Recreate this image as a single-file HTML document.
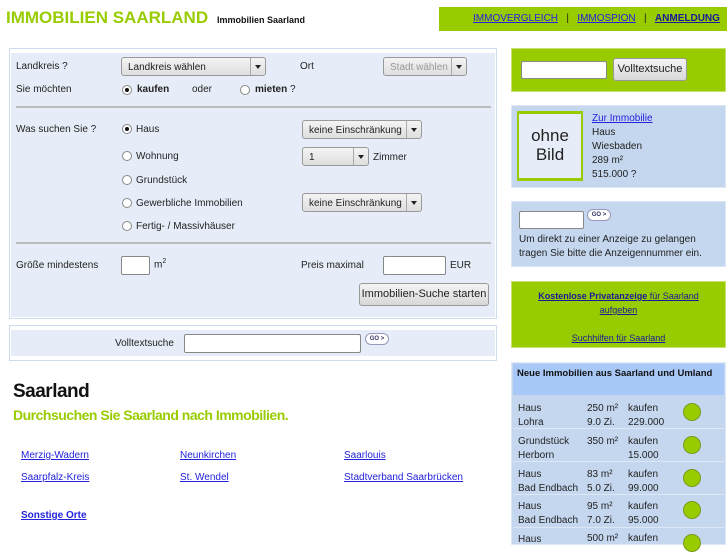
<!DOCTYPE html>
<html><head><meta charset="utf-8"><style>
*{margin:0;padding:0;box-sizing:border-box}
body{width:727px;height:545px;overflow:hidden;background:#fff;font-family:"Liberation Sans","DejaVu Sans",sans-serif;font-size:10px;color:#222;position:relative}
.a{position:absolute;white-space:nowrap}
a{color:#2222dd;text-decoration:underline}
.sel{position:absolute;height:19px;border:1px solid #999;border-radius:3px;background:linear-gradient(#f4f4f4,#dedede);font-size:10px;padding:4px 6px;color:#222}
.sel:after{content:"";position:absolute;right:0;top:0;bottom:0;width:14px;border-left:1px solid #aaa}
.sel i{position:absolute;right:4px;top:7px;border:3px solid transparent;border-top:4px solid #222;z-index:1}
.inp{position:absolute;background:#fff;border:1px solid #888;border-radius:2px}
.rad{position:absolute;width:10px;height:10px;border:1px solid #888;border-radius:50%;background:#fff}
.rad.on:after{content:"";position:absolute;left:2px;top:2px;width:4px;height:4px;border-radius:50%;background:#111}
.btn{position:absolute;border:1px solid #999;border-radius:3px;background:linear-gradient(#f4f4f4,#d8d8d8);font-size:11px;text-align:center;color:#222}
.go{position:absolute;width:24px;height:12px;border:1px solid #99b;border-radius:6px;background:#fff;font-size:6px;font-weight:bold;color:#336;text-align:center;line-height:10px}
.ln{position:absolute;left:16px;width:475px;height:2px;background:#bbb}
.dot{position:absolute;left:683px;width:18px;height:18px;border-radius:50%;background:#99cc00;border:1px solid #7a9a20}
.t{margin-top:1px}
</style></head><body>
<div class="a" style="left:6px;top:8px;font-size:17px;font-weight:bold;color:#99cc00">IMMOBILIEN SAARLAND</div>
<div class="a" style="left:217px;top:15px;font-size:9px;font-weight:bold;color:#111">Immobilien Saarland</div>
<div class="a" style="left:439px;top:7px;width:288px;height:24px;background:#99cc00"></div>
<div class="a" style="left:473px;top:13px;font-size:10px"><a>IMMOVERGLEICH</a> &nbsp; | &nbsp; <a>IMMOSPION</a> &nbsp; | &nbsp; <a style="font-weight:bold;color:#1a1a99">ANMELDUNG</a></div>

<div class="a" style="left:9px;top:48px;width:488px;height:271px;border:1px solid #cfdcf0;background:#fff"></div>
<div class="a" style="left:11px;top:53px;width:484px;height:264px;background:#e7edf8"></div>
<div class="a" style="left:16px;top:61px">Landkreis ?</div>
<div class="sel" style="left:121px;top:57px;width:145px">Landkreis wählen<i></i></div>
<div class="a" style="left:300px;top:61px">Ort</div>
<div class="sel" style="left:383px;top:57px;width:84px;color:#999">Stadt wählen<i></i></div>
<div class="a" style="left:16px;top:84px">Sie möchten</div>
<div class="rad on" style="left:122px;top:85px"></div><div class="a" style="left:137px;top:84px;font-weight:bold">kaufen</div>
<div class="a" style="left:192px;top:84px">oder</div>
<div class="rad" style="left:240px;top:85px"></div><div class="a" style="left:255px;top:84px"><b>mieten</b> ?</div>
<div class="ln" style="top:106px"></div>
<div class="a" style="left:16px;top:124px">Was suchen Sie ?</div>
<div class="rad on" style="left:122px;top:124px"></div><div class="a" style="left:136px;top:124px">Haus</div>
<div class="rad" style="left:122px;top:151px"></div><div class="a" style="left:136px;top:151px">Wohnung</div>
<div class="rad" style="left:122px;top:175px"></div><div class="a" style="left:136px;top:175px">Grundstück</div>
<div class="rad" style="left:122px;top:198px"></div><div class="a" style="left:136px;top:198px">Gewerbliche Immobilien</div>
<div class="rad" style="left:122px;top:221px"></div><div class="a" style="left:136px;top:221px">Fertig- / Massivhäuser</div>
<div class="sel" style="left:302px;top:120px;width:120px">keine Einschränkung<i></i></div>
<div class="sel" style="left:302px;top:147px;width:67px">1<i></i></div>
<div class="a" style="left:373px;top:152px">Zimmer</div>
<div class="sel" style="left:302px;top:193px;width:120px">keine Einschränkung<i></i></div>
<div class="ln" style="top:242px"></div>
<div class="a" style="left:16px;top:260px">Größe mindestens</div>
<div class="inp" style="left:121px;top:256px;width:29px;height:19px"></div>
<div class="a" style="left:154px;top:258px">m<sup style="font-size:7px">2</sup></div>
<div class="a" style="left:301px;top:260px">Preis maximal</div>
<div class="inp" style="left:383px;top:256px;width:63px;height:19px"></div>
<div class="a" style="left:450px;top:260px">EUR</div>
<div class="btn" style="left:359px;top:283px;width:130px;height:23px;line-height:21px">Immobilien-Suche starten</div>

<div class="a" style="left:9px;top:325px;width:488px;height:36px;border:1px solid #cfdcf0;background:#fff"></div>
<div class="a" style="left:11px;top:330px;width:484px;height:26px;background:#e7edf8"></div>
<div class="a" style="left:115px;top:338px">Volltextsuche</div>
<div class="inp" style="left:184px;top:334px;width:177px;height:19px"></div>
<div class="go" style="left:365px;top:333px">GO &gt;</div>

<div class="a" style="left:13px;top:381px;font-size:19px;font-weight:bold;color:#111;letter-spacing:-0.5px">Saarland</div>
<div class="a" style="left:13px;top:407px;font-size:14px;font-weight:bold;color:#99cc00;letter-spacing:-0.5px">Durchsuchen Sie Saarland nach Immobilien.</div>
<div class="a" style="left:21px;top:450px"><a>Merzig-Wadern</a></div>
<div class="a" style="left:180px;top:450px"><a>Neunkirchen</a></div>
<div class="a" style="left:344px;top:450px"><a>Saarlouis</a></div>
<div class="a" style="left:21px;top:472px"><a>Saarpfalz-Kreis</a></div>
<div class="a" style="left:180px;top:472px"><a>St. Wendel</a></div>
<div class="a" style="left:344px;top:472px"><a>Stadtverband Saarbrücken</a></div>
<div class="a" style="left:21px;top:510px;font-weight:bold"><a>Sonstige Orte</a></div>

<div class="a" style="left:511px;top:48px;width:215px;height:44px;background:#99cc00;border:1px solid #c8e070"></div>
<div class="inp" style="left:521px;top:61px;width:86px;height:18px"></div>
<div class="btn" style="left:613px;top:58px;width:74px;height:23px;line-height:21px">Volltextsuche</div>

<div class="a" style="left:511px;top:105px;width:215px;height:83px;background:#c5d7ef;border:1px solid #dde7f5"></div>
<div class="a" style="left:517px;top:111px;width:66px;height:70px;background:#e7edf8;border:3px solid #99cc00;border-left-width:2px;border-right-width:2px;font-size:17px;text-align:center;line-height:19px;padding-top:12px;color:#222;white-space:normal">ohne<br>Bild</div>
<div class="a" style="left:592px;top:112px;line-height:14px"><a>Zur Immobilie</a><br>Haus<br>Wiesbaden<br>289 m²<br>515.000 ?</div>

<div class="a" style="left:511px;top:201px;width:215px;height:66px;background:#c5d7ef;border:1px solid #dde7f5"></div>
<div class="inp" style="left:519px;top:211px;width:65px;height:18px"></div>
<div class="go" style="left:587px;top:209px">GO &gt;</div>
<div class="a" style="left:519px;top:233px;line-height:14px">Um direkt zu einer Anzeige zu gelangen<br>tragen Sie bitte die Anzeigennummer ein.</div>

<div class="a" style="left:511px;top:281px;width:215px;height:67px;background:#99cc00;border:1px solid #c8e070"></div>
<div class="a" style="left:511px;top:289px;width:215px;text-align:center;font-size:9px;line-height:14px;color:#2a2a8a"><a style="color:#1a1a99"><b>Kostenlose Privatanzeige</b> für Saarland</a><br><a style="color:#1a1a99">aufgeben</a><br><br><a style="color:#1a1a99">Suchhilfen für Saarland</a></div>

<div class="a" style="left:511px;top:362px;width:215px;height:183px;background:#c5d7ef;border:1px solid #dde7f5"></div>
<div class="a" style="left:513px;top:364px;width:211px;height:31px;background:#a8c8f8"></div>
<div class="a" style="left:517px;top:368px;font-size:9.5px;font-weight:bold;color:#111">Neue Immobilien aus Saarland und Umland</div>
<div class="a" style="left:513px;top:428px;width:211px;height:1px;background:#dde7f5"></div>
<div class="a" style="left:513px;top:461px;width:211px;height:1px;background:#dde7f5"></div>
<div class="a" style="left:513px;top:494px;width:211px;height:1px;background:#dde7f5"></div>
<div class="a" style="left:513px;top:527px;width:211px;height:1px;background:#dde7f5"></div>
<div class="a" style="left:518px;top:402px;line-height:14px">Haus<br>Lohra</div><div class="a" style="left:587px;top:402px;line-height:14px">250 m²<br>9.0 Zi.</div><div class="a" style="left:628px;top:402px;line-height:14px">kaufen<br>229.000</div><div class="dot" style="top:403px"></div>
<div class="a" style="left:518px;top:435px;line-height:14px">Grundstück<br>Herborn</div><div class="a" style="left:587px;top:435px;line-height:14px">350 m²</div><div class="a" style="left:628px;top:435px;line-height:14px">kaufen<br>15.000</div><div class="dot" style="top:436px"></div>
<div class="a" style="left:518px;top:468px;line-height:14px">Haus<br>Bad Endbach</div><div class="a" style="left:587px;top:468px;line-height:14px">83 m²<br>5.0 Zi.</div><div class="a" style="left:628px;top:468px;line-height:14px">kaufen<br>99.000</div><div class="dot" style="top:469px"></div>
<div class="a" style="left:518px;top:500px;line-height:14px">Haus<br>Bad Endbach</div><div class="a" style="left:587px;top:500px;line-height:14px">95 m²<br>7.0 Zi.</div><div class="a" style="left:628px;top:500px;line-height:14px">kaufen<br>95.000</div><div class="dot" style="top:501px"></div>
<div class="a" style="left:518px;top:533px;line-height:14px">Haus</div><div class="a" style="left:587px;top:533px">500 m²</div><div class="a" style="left:628px;top:533px">kaufen</div><div class="dot" style="top:534px"></div>
</body></html>
